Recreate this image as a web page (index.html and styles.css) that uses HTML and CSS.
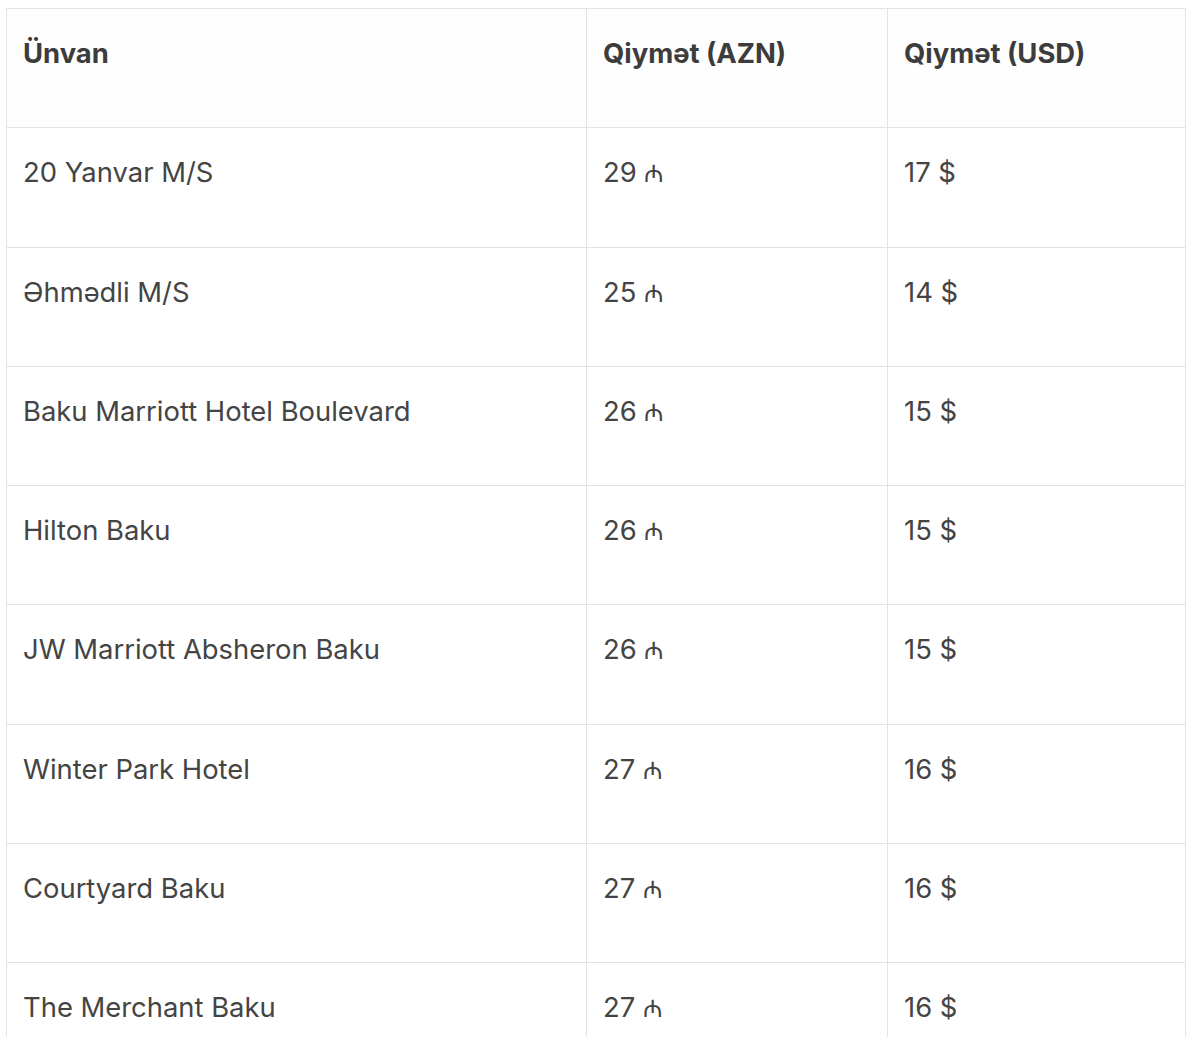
FILE: index.html
```html
<!DOCTYPE html>
<html lang="az">
<head>
<meta charset="utf-8">
<link rel="stylesheet" href="styles.css">
</head>
<body>
<table class="prices">
  <colgroup>
    <col class="c1"><col class="c2"><col class="c3">
  </colgroup>
  <thead>
    <tr><th>Ünvan</th><th>Qiymət (AZN)</th><th>Qiymət (USD)</th></tr>
  </thead>
  <tbody>
    <tr><td>20 Yanvar M/S</td><td>29 <span class="m">₼</span></td><td>17 $</td></tr>
    <tr><td>Əhmədli M/S</td><td>25 <span class="m">₼</span></td><td>14 $</td></tr>
    <tr><td>Baku Marriott Hotel Boulevard</td><td>26 <span class="m">₼</span></td><td>15 $</td></tr>
    <tr><td>Hilton Baku</td><td>26 <span class="m">₼</span></td><td>15 $</td></tr>
    <tr><td>JW Marriott Absheron Baku</td><td>26 <span class="m">₼</span></td><td>15 $</td></tr>
    <tr><td>Winter Park Hotel</td><td>27 <span class="m">₼</span></td><td>16 $</td></tr>
    <tr><td>Courtyard Baku</td><td>27 <span class="m">₼</span></td><td>16 $</td></tr>
    <tr><td>The Merchant Baku</td><td>27 <span class="m">₼</span></td><td>16 $</td></tr>
  </tbody>
</table>
</body>
</html>
```
FILE: styles.css
```css
html, body {
  margin: 0;
  padding: 0;
  background: #ffffff;
}
body {
  padding: 8px 15px 0 6px;
  font-family: Inter, "Liberation Sans", sans-serif;
  color: #444444;
}
.prices {
  width: 1179px;
  border-collapse: collapse;
  table-layout: fixed;
}
.c1 { width: 580px; }
.c2 { width: 301px; }
.c3 { width: 298px; }
.prices th,
.prices td {
  border: 1px solid #e3e3e3;
  height: 119.3px;
  box-sizing: border-box;
  padding: 26px 16px 16px 16px;
  vertical-align: top;
  text-align: left;
  font-size: 27.4px;
  line-height: 36px;
}
.prices th {
  font-weight: 700;
  color: #3c3c3c;
  background: #fefefe;
}
.prices td {
  font-weight: 400;
}
.m {
  font-family: "DejaVu Sans", sans-serif;
  font-size: 24px;
}
```
